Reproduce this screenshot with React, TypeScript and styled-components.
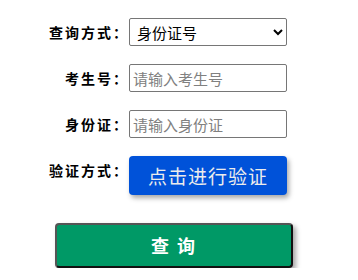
import styled, { createGlobalStyle } from "styled-components";

const GlobalStyle = createGlobalStyle`
    body {
        margin: 0;
        background: #fff;
        font-family: "Noto Sans CJK SC", "Noto Sans", sans-serif;
    }
`

function App() {
    return (
        <Page>
            <GlobalStyle />
            <Form>
                <Label>查询方式：</Label>
                <Select defaultValue="id">
                    <option value="id">身份证号</option>
                    <option value="no">考生号</option>
                </Select>

                <Label>考生号：</Label>
                <Input placeholder="请输入考生号" />

                <Label>身份证：</Label>
                <Input placeholder="请输入身份证" />

                <Label>验证方式：</Label>
                <VerifyButton type="button">点击进行验证</VerifyButton>
            </Form>
            <QueryButton type="button">查 询</QueryButton>
        </Page>
    );
}

const Page = styled.div`
    padding-top: 18px;
`

const Form = styled.div`
    display: grid;
    grid-template-columns: 129px 158px;
    row-gap: 18px;
    align-items: start;
`

const Label = styled.div`
    text-align: right;
    font-size: 14px;
    font-weight: bold;
    letter-spacing: 2px;
    line-height: 28px;
    color: #000;
`

const fieldBase = `
    box-sizing: border-box;
    width: 158px;
    height: 28px;
    border: 1px solid #767676;
    border-radius: 2px;
    font-family: "Noto Sans CJK SC", "Noto Sans", sans-serif;
    font-size: 15px;
    padding: 0 3px;
    background: #fff;
    color: #000;
    outline: none;
`

const Select = styled.select`
    ${fieldBase}
`

const Input = styled.input`
    ${fieldBase}
    &::placeholder {
        color: #808080;
    }
`

const VerifyButton = styled.button`
    width: 158px;
    height: 39px;
    border: none;
    border-radius: 4px;
    background: #0052d9;
    color: #ececec;
    font-family: "Noto Sans CJK SC", "Noto Sans", sans-serif;
    font-size: 19px;
    letter-spacing: 1px;
    box-shadow: 2px 3px 5px rgba(0, 0, 0, 0.35);
    cursor: pointer;
`

const QueryButton = styled.button`
    display: block;
    box-sizing: border-box;
    width: 238px;
    height: 45px;
    margin: 28px 0 0 55px;
    padding: 0 0 2px;
    border: 2px solid #333;
    border-top-color: #555;
    border-left-color: #555;
    border-right-color: #111;
    border-bottom-color: #111;
    border-radius: 4px;
    background: #009966;
    color: #fff;
    font-family: "Noto Sans CJK SC", "Noto Sans", sans-serif;
    font-size: 18px;
    font-weight: bold;
    letter-spacing: 2px;
    white-space: pre;
    box-shadow: 3px 3px 5px rgba(0, 0, 0, 0.35);
    cursor: pointer;
`

export default App;
